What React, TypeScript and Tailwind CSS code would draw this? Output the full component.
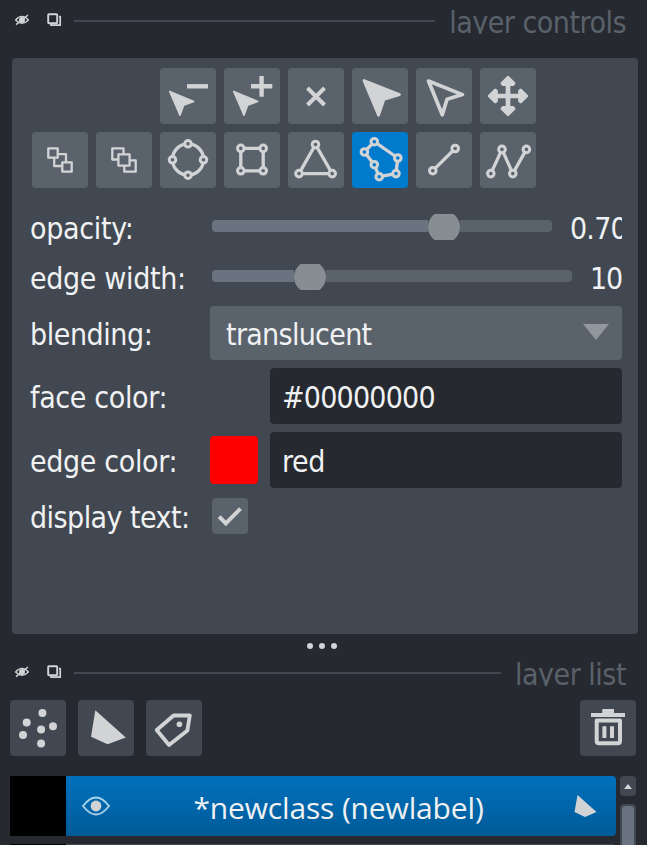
import React from "react";

const INK = "#d2d3d5";
type P = [number, number];

function Icon({ children }: { children: React.ReactNode }) {
  return (
    <svg viewBox="0 0 56 56" className="block size-14" fill="none" stroke={INK} strokeLinejoin="round">
      {children}
    </svg>
  );
}

function ToolButton({ children, active, dark, label }: { children: React.ReactNode; active?: boolean; dark?: boolean; label: string }) {
  const bg = active ? "bg-[#007acc]" : dark ? "bg-[#414851]" : "bg-[#5a626c]";
  return (
    <button aria-label={label} className={`size-14 shrink-0 rounded ${bg}`}>
      <Icon>{children}</Icon>
    </button>
  );
}

/* Lines joined by ring-shaped vertex handles */
function Vertices({ points, closed, bg = "#5a626c" }: { points: P[]; closed?: boolean; bg?: string }) {
  const d = "M" + points.map((p) => p.join(" ")).join("L") + (closed ? "Z" : "");
  return (
    <>
      <path d={d} strokeWidth="3.3" />
      {points.map(([x, y]) => (
        <circle key={`${x}-${y}`} cx={x} cy={y} r="3.3" fill={bg} strokeWidth="3" />
      ))}
    </>
  );
}

function SmallArrow() {
  return <path d="M9.7 23.4L33.7 33.4L23.6 37.2L20 47.3Z" fill={INK} strokeWidth="1.6" />;
}

function DockTitle({ title, spacing }: { title: string; spacing: string }) {
  return (
    <div className="flex h-[34px] items-start overflow-hidden pl-[14px] pr-[21px]">
      <svg viewBox="0 0 16 14" className="mt-[13px] h-[14px] w-4 shrink-0" fill="none" stroke={INK}>
        <path d="M1.6 7Q8 -.1 14.4 7Q8 13.8 1.6 7Z" strokeWidth="1.3" />
        <circle cx="8" cy="7" r="3" fill={INK} stroke="none" />
        <path d="M2 11.6L14 2" strokeWidth="1.4" />
      </svg>
      <svg viewBox="0 0 16 16" className="ml-4 mt-3 size-4 shrink-0" fill="none" stroke={INK}>
        <rect x="2.2" y="2.2" width="9" height="9" rx=".7" strokeWidth="1.9" />
        <path d="M13 4.5H14.2V13.2H5V12" strokeWidth="1.7" strokeLinejoin="round" />
      </svg>
      <div className="ml-3 mt-5 h-0.5 flex-1 bg-[#414851]" />
      <span className={`ml-[14px] mt-[5px] whitespace-nowrap text-[30px] leading-[36px] text-[#59616b] ${spacing}`}>{title}</span>
    </div>
  );
}

function Row({ label, height, spacing, children }: { label: string; height: string; spacing: string; children: React.ReactNode }) {
  return (
    <div className={`flex items-center ${height}`}>
      <label className={`w-[180px] shrink-0 whitespace-nowrap pt-1 ${spacing}`}>{label}</label>
      {children}
    </div>
  );
}

function Slider({ width, fill }: { width: string; fill: string }) {
  return (
    <div className={`mb-0.5 ml-0.5 flex h-[26px] items-center ${width}`}>
      <div className={`h-3 rounded-l bg-[#6a7380] ${fill}`} />
      <div className="mt-0.5 flex h-[26px] w-8 shrink-0 items-center overflow-hidden">
        <div className="-my-[3px] size-8 shrink-0 rounded-full bg-[#868e93]" />
      </div>
      <div className="h-3 flex-1 rounded-r bg-[#5a626c]" />
    </div>
  );
}

export default function App() {
  return (
    <div className="h-[845px] w-[647px] overflow-hidden bg-[#262930] font-['DejaVu_Sans_Condensed','DejaVu_Sans',sans-serif] text-[30px] leading-[36px] text-[#f0f1f2]">
      <DockTitle title="layer controls" spacing="tracking-[-0.5px]" />

      <section className="ml-3 mt-6 h-[576px] w-[626px] rounded bg-[#414851] pl-[18px] pt-[10px]">
        <div className="ml-[130px] flex gap-2">
          <ToolButton label="remove vertex">
            <SmallArrow />
            <path d="M27 18.3H48" strokeWidth="4.4" />
          </ToolButton>
          <ToolButton label="insert vertex">
            <SmallArrow />
            <path d="M27 18.3H48.3M37.6 8V28.7" strokeWidth="4.4" />
          </ToolButton>
          <ToolButton label="delete shape">
            <path d="M19.5 20L36.5 37M36.5 20L19.5 37" strokeWidth="4" />
          </ToolButton>
          <ToolButton label="select shapes">
            <path d="M12 12.6L47.5 26.6L32 31.3L26.5 47.3Z" fill={INK} strokeWidth="2.8" />
          </ToolButton>
          <ToolButton label="direct select">
            <path d="M12.5 13L46.5 26.6L31 31.2L26.3 46.8Z" strokeWidth="3.7" />
          </ToolButton>
          <ToolButton label="pan and zoom">
            <path d="M28 13V43M13 28H43" strokeWidth="4.7" />
            <path d="M28 9.3L34 15.3L33 16.5H23L22 15.3ZM28 46.7L34 40.7L33 39.5H23L22 40.7ZM9.3 28L15.3 22L16.5 23V33L15.3 34ZM46.7 28L40.7 22L39.5 23V33L40.7 34Z" fill={INK} strokeWidth="2.8" />
          </ToolButton>
        </div>
        <div className="ml-0.5 mt-2 flex gap-2">
          <ToolButton label="move to back">
            <g strokeWidth="2.3">
              <rect x="16.3" y="16.3" width="9.4" height="9.4" />
              <rect x="30.3" y="30.3" width="9.4" height="9.4" />
              <path d="M26 22.2H34V30M22.2 26V34H30" />
            </g>
          </ToolButton>
          <ToolButton label="move to front">
            <g strokeWidth="2.3">
              <rect x="22.4" y="22.4" width="11.2" height="11.2" />
              <path d="M22 27.5H16.3V16.3H27.5V22M34 28.3H39.7V39.7H28.3V34" />
            </g>
          </ToolButton>
          <ToolButton label="ellipse">
            <circle cx="28" cy="27.5" r="15.6" strokeWidth="3.3" />
            {([[28, 11.8], [43.5, 27.8], [28, 43.2], [12.5, 27.8]] as P[]).map(([x, y]) => (
              <circle key={`${x}-${y}`} cx={x} cy={y} r="3.3" fill="#5a626c" strokeWidth="3" />
            ))}
          </ToolButton>
          <ToolButton label="rectangle">
            <Vertices closed points={[[16.8, 16.4], [39.2, 16.4], [39.2, 38.8], [16.8, 38.8]]} />
          </ToolButton>
          <ToolButton label="triangle">
            <Vertices closed points={[[27.5, 12.5], [44.2, 41.6], [11, 41.6]]} />
          </ToolButton>
          <ToolButton label="polygon" active>
            <Vertices closed bg="#007acc" points={[[22.3, 9.7], [45.8, 26], [44, 41.6], [27.2, 44.7], [22.3, 32.7], [12.4, 20]]} />
          </ToolButton>
          <ToolButton label="line">
            <Vertices points={[[39.2, 16.5], [16.8, 38.7]]} />
          </ToolButton>
          <ToolButton label="path">
            <Vertices points={[[10.8, 41.6], [22, 17.4], [32.8, 41.6], [46.4, 17.4]]} />
          </ToolButton>
        </div>

        <div className="mt-[14px] w-[592px]">
          <Row label="opacity:" height="h-[50px]" spacing="tracking-[-0.3px]">
            <Slider width="w-[340px]" fill="w-[216px]" />
            <span className="ml-[18px] w-[52px] overflow-hidden pt-1 tracking-[-0.8px]">0.70</span>
          </Row>
          <Row label="edge width:" height="h-[50px]" spacing="tracking-[-0.35px]">
            <Slider width="w-[360px]" fill="w-[82px]" />
            <span className="ml-[18px] pt-1 tracking-[-1.2px]">10</span>
          </Row>
          <Row label="blending:" height="h-[62px]" spacing="tracking-[-0.45px]">
            <div className="flex h-[54px] w-[412px] items-center justify-between rounded bg-[#5a626c] pl-4 pr-[13px]">
              <span className="pt-1 tracking-[-0.7px]">translucent</span>
              <svg viewBox="0 0 26 16" className="mb-0.5 h-4 w-[26px]"><path d="M0 0H26L13 16Z" fill="#92969d" /></svg>
            </div>
          </Row>
          <Row label="face color:" height="h-[64px]" spacing="tracking-[-0.35px]">
            <div className="ml-[60px] flex h-14 w-[352px] items-center rounded bg-[#262930] pl-3 pt-1 tracking-[-0.8px]">#00000000</div>
          </Row>
          <Row label="edge color:" height="h-[64px]" spacing="tracking-[-0.35px]">
            <div className="size-12 rounded-sm bg-[#ff0000]" />
            <div className="ml-3 flex h-14 w-[352px] items-center rounded bg-[#262930] pl-3 pt-1 tracking-[-0.4px]">red</div>
          </Row>
          <Row label="display text:" height="h-[48px]" spacing="tracking-[-0.55px]">
            <div className="ml-0.5 size-9 rounded-sm bg-[#5a626c]">
              <svg viewBox="0 0 36 36" className="size-9" fill="none"><path d="M7.2 18.7L13.8 25.4L28.5 10.7" stroke={INK} strokeWidth="4" /></svg>
            </div>
          </Row>
        </div>
      </section>

      <div className="flex h-[18px] items-center justify-center gap-[6px] pr-[3px] pt-[6px]">
        <i className="size-1.5 rounded-full bg-[#d2d3d5]" />
        <i className="size-1.5 rounded-full bg-[#d2d3d5]" />
        <i className="size-1.5 rounded-full bg-[#d2d3d5]" />
      </div>

      <DockTitle title="layer list" spacing="tracking-[-0.5px]" />

      <div className="mt-[14px] flex pl-[10px] pr-[11px]">
        <div className="flex flex-1 gap-3">
          <ToolButton dark label="new points layer">
            <g fill={INK} stroke="none">
              <circle cx="32.4" cy="13" r="4" /><circle cx="16.7" cy="22.4" r="4" /><circle cx="43" cy="26.2" r="4" />
              <circle cx="31.1" cy="29.5" r="4" /><circle cx="13" cy="35" r="4" /><circle cx="31.1" cy="43.5" r="4" />
            </g>
          </ToolButton>
          <ToolButton dark label="new shapes layer">
            <path d="M17.3 10.3L47.8 37.5L29.6 44.2L13 36.8Z" fill={INK} stroke="none" />
          </ToolButton>
          <ToolButton dark label="new labels layer">
            <path d="M10.7 30L27.6 15.5H43.8L41.4 30.4L23 45Z" strokeWidth="3.8" />
            <circle cx="33.4" cy="24.3" r="2.8" fill={INK} stroke="none" />
          </ToolButton>
        </div>
        <ToolButton dark label="delete layer">
          <path d="M11 15H45M22.3 11H34" strokeWidth="4" />
          <path d="M16.7 20.5H40V41Q40 43.3 37.7 43.3H19Q16.7 43.3 16.7 41Z" strokeWidth="4" />
          <path d="M24.4 26.3V38M32 26.3V38" strokeWidth="4" />
        </ToolButton>
      </div>

      <div className="mt-5 flex pl-[10px]">
        <div className="flex w-[606px] flex-col gap-2">
          <div className="flex h-[60px]">
            <div className="w-14 bg-black" />
            <div className="flex flex-1 items-center rounded-r bg-linear-to-b from-[#0070bc] to-[#005b98] pl-4 pr-[19px]">
              <svg viewBox="0 0 28 20" className="h-5 w-7 shrink-0" fill="none">
                <path d="M1 10Q14 -7 27 10Q14 27 1 10Z" stroke="#acd3ec" strokeWidth="1.8" />
                <circle cx="14" cy="10" r="5.4" fill={INK} />
              </svg>
              <span className="flex-1 whitespace-nowrap pr-[7px] pt-1 text-center font-['Open_Sans','Noto_Sans',sans-serif] text-[30px] tracking-[-0.15px]">*newclass (newlabel)</span>
              <svg viewBox="0 0 23 23" className="h-[23px] w-[23px] shrink-0"><path d="M3.5 0L22.5 17L11 22L.5 17Z" fill={INK} /></svg>
            </div>
          </div>
          <div className="flex h-[60px]">
            <div className="w-14 bg-black" />
            <div className="flex-1 rounded-r bg-[#414851]" />
          </div>
        </div>
        <div className="ml-1 flex w-4 flex-col gap-2">
          <div className="flex h-5 items-center justify-center rounded bg-[#414851]">
            <svg viewBox="0 0 8 5" className="h-[5px] w-2"><path d="M4 0L8 5H0Z" fill={INK} /></svg>
          </div>
          <div className="h-24 rounded bg-[#414851] px-0.5 pt-0.5">
            <div className="h-20 rounded bg-[#6a7380]" />
          </div>
        </div>
      </div>
    </div>
  );
}
